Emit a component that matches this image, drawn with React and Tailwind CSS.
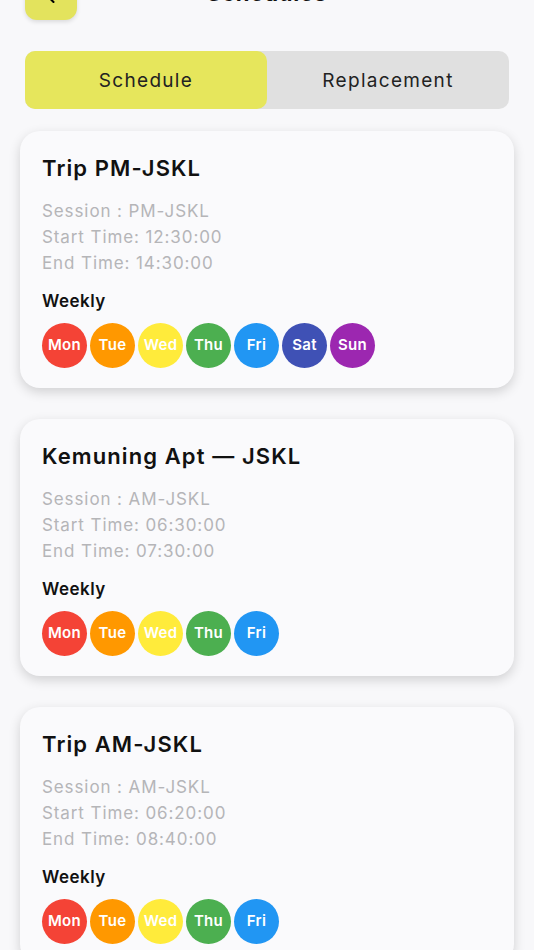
import { ChevronLeft } from "lucide-react";

const DAY_COLORS = {
    Mon: "bg-[#f44336]",
    Tue: "bg-[#ff9800]",
    Wed: "bg-[#ffeb3b]",
    Thu: "bg-[#4caf50]",
    Fri: "bg-[#2196f3]",
    Sat: "bg-[#3f51b5]",
    Sun: "bg-[#9c27b0]",
};

const schedules = [
    {
        title: "Trip PM-JSKL",
        session: "PM-JSKL",
        start: "12:30:00",
        end: "14:30:00",
        days: ["Mon", "Tue", "Wed", "Thu", "Fri", "Sat", "Sun"],
    },
    {
        title: "Kemuning Apt — JSKL",
        session: "AM-JSKL",
        start: "06:30:00",
        end: "07:30:00",
        days: ["Mon", "Tue", "Wed", "Thu", "Fri"],
    },
    {
        title: "Trip AM-JSKL",
        session: "AM-JSKL",
        start: "06:20:00",
        end: "08:40:00",
        days: ["Mon", "Tue", "Wed", "Thu", "Fri"],
    },
];

function ScheduleCard({ item }) {
    return (
        <div className="rounded-[20px] bg-[#fafafc] px-[22px] pb-5 pt-[23px] shadow-[0_4px_12px_rgba(0,0,0,0.16)]">
            <h2 className="text-[22px] font-semibold leading-[28px] tracking-[1.1px] text-[#111]">
                {item.title}
            </h2>
            <div className="mt-[16px] text-[17px] leading-[26px] tracking-[0.9px] text-[#b5b5b8]">
                <p>Session : {item.session}</p>
                <p>Start Time: {item.start}</p>
                <p>End Time: {item.end}</p>
            </div>
            <p className="mt-[14px] text-[17px] font-semibold leading-[22px] tracking-[0.5px] text-[#111]">
                Weekly
            </p>
            <div className="mt-[11px] flex gap-[3px]">
                {item.days.map((d) => (
                    <span
                        key={d}
                        className={`flex h-[45px] w-[45px] items-center justify-center rounded-full text-[15px] font-semibold tracking-[0.3px] text-white ${DAY_COLORS[d]}`}
                    >
                        {d}
                    </span>
                ))}
            </div>
        </div>
    );
}

export default function App() {
    return (
        <main className="min-h-screen overflow-hidden bg-[#f8f8fa] px-5 font-['Inter',sans-serif]">
            {/* header, scrolled partly out of view */}
            <header className="relative -mt-[32px] flex h-[52px] items-center px-[5px]">
                <button className="flex h-[52px] w-[52px] items-center justify-center rounded-[12px] bg-[#e3e35d] shadow-[0_2px_4px_rgba(0,0,0,0.12)]">
                    <ChevronLeft size={26} strokeWidth={2.5} className="pt-[6px] text-black" />
                </button>
                <h1 className="absolute left-0 right-0 top-[9px] text-center text-[22px] font-bold tracking-[0.8px] text-[#111]">
                    Schedules
                </h1>
            </header>

            {/* tabs */}
            <div className="mx-[5px] mt-[31px] flex h-[58px] rounded-[10px] bg-[#e0e0e0] pt-[2px] text-[19px] tracking-[1.3px] text-[#222]">
                <button className="-mt-[2px] flex-1 rounded-[10px] bg-[#e6e65c] pt-[2px]">Schedule</button>
                <button className="flex-1">Replacement</button>
            </div>

            <div className="mt-[22px] flex flex-col gap-[31px] pb-10">
                {schedules.map((s) => (
                    <ScheduleCard key={s.title} item={s} />
                ))}
            </div>
        </main>
    );
}
